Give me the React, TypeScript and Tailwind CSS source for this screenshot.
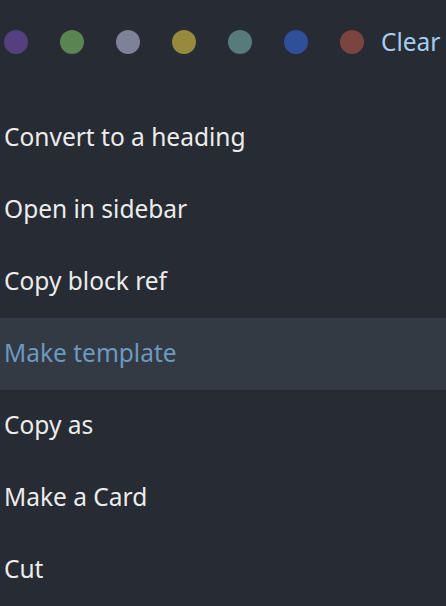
import React from 'react'

const colors = ['#553f7f', '#5a8451', '#7d8299', '#978a3c', '#577a7b', '#2f4f99', '#7a4440']

const items = [
  'Convert to a heading',
  'Open in sidebar',
  'Copy block ref',
  'Make template',
  'Copy as',
  'Make a Card',
  'Cut',
]

export default function App() {
  return (
    <div className="w-[446px] h-[606px] overflow-hidden bg-[#272b33] font-['Noto_Sans','Lato',sans-serif]">
      <div className="h-[84px] flex items-center pl-[4px] gap-[32px]">
        {colors.map(c => (
          <span key={c} className="w-6 h-6 rounded-full shrink-0" style={{ backgroundColor: c }} />
        ))}
        <span className="-ml-[15px] text-[24.5px] text-[#a6cdf0] leading-none">Clear</span>
      </div>
      <div className="mt-[18px]">
        {items.map(label => {
          const active = label === 'Make template'
          return (
            <div key={label}
              className={`h-[72px] flex items-center px-[4px] pb-[2px] text-[24.5px] ${
                active ? 'bg-[#343a43] text-[#6b9ac0]' : 'text-[#ececec]'
              }`}>
              {label}
            </div>
          )
        })}
      </div>
    </div>
  )
}
